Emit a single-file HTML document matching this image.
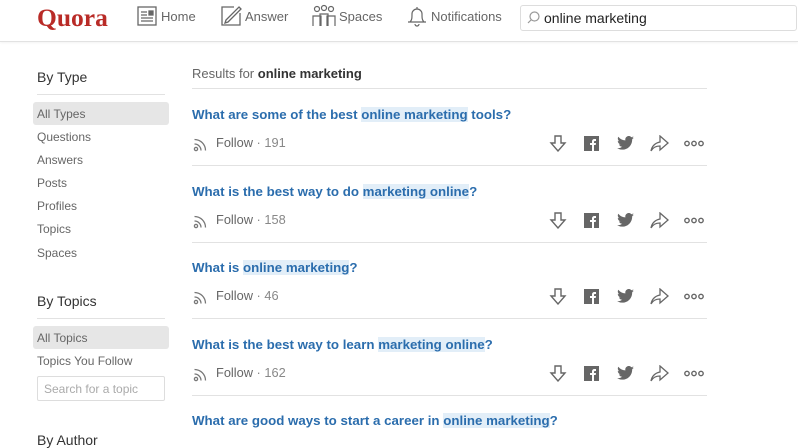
<!DOCTYPE html>
<html><head><meta charset="utf-8"><style>
*{margin:0;padding:0;box-sizing:border-box}
body{width:798px;height:440px;overflow:hidden;background:#fff;font-family:"Liberation Sans",Arial,sans-serif;position:relative;color:#333}
.a{position:absolute}
.hdr{left:0;top:0;width:798px;height:42px;border-bottom:1px solid #e2e2e2;box-shadow:0 1px 2px rgba(0,0,0,.05)}
.logo{left:37px;top:3px;font-family:"Liberation Serif",serif;font-weight:bold;font-size:25.5px;color:#b92b27}
.nav{font-size:13px;color:#666;top:9px}
.srch{left:520px;top:5px;width:277px;height:26px;border:1px solid #ddd;border-radius:3px;font-size:14px;color:#222;padding:4px 0 0 23px}
.h{font-size:14px;color:#333}
.ln{height:1px;background:#e2e2e2}
.it{font-size:12px;color:#666;left:37px}
.sel{left:33px;width:136px;height:23px;background:#e6e6e6;border-radius:3px}
.q{left:192px;font-size:13.3px;font-weight:bold;color:#2b6dad}
.q span{background:#e2eef8}
.f{left:216px;font-size:12.8px;color:#666}
.f b{font-weight:normal;color:#888}
</style></head><body>
<div class="a hdr"></div>
<div class="a logo">Quora</div>
<svg class="a" style="left:137px;top:6px" width="20" height="20" viewBox="0 0 20 20" fill="none" stroke="#666" stroke-width="1.3"><rect x="1" y="1" width="18" height="18"/><path d="M4 6h6M4 9h6M4 12h12M4 15h12"/><rect x="12" y="5" width="4" height="4" fill="#666"/></svg>
<div class="a nav" style="left:161px">Home</div>
<svg class="a" style="left:220px;top:5px" width="22" height="22" viewBox="0 0 22 22" fill="none" stroke="#666" stroke-width="1.3"><path d="M14 2H2v18h18V8"/><path d="M19 2l2 2L8 17l-3 1 1-3z"/></svg>
<div class="a nav" style="left:245px">Answer</div>
<svg class="a" style="left:312px;top:4px" width="24" height="23" viewBox="0 0 24 23" fill="none" stroke="#666" stroke-width="1.2"><circle cx="5" cy="5" r="2.5"/><circle cx="12" cy="4" r="2.5"/><circle cx="19" cy="5" r="2.5"/><path d="M1 22v-10h8v10M8 22v-12h8v12M15 22v-10h8v10"/></svg>
<div class="a nav" style="left:339px">Spaces</div>
<svg class="a" style="left:407px;top:5px" width="20" height="22" viewBox="0 0 20 22" fill="none" stroke="#666" stroke-width="1.2"><path d="M3 17c2-2 2-4 2-8a5 5 0 0110 0c0 4 0 6 2 8zM1 17h18M8 19a2 2 0 004 0M10 2v2"/></svg>
<div class="a nav" style="left:431px">Notifications</div>
<div class="a srch">online marketing</div>
<svg class="a" style="left:527px;top:11px" width="13" height="13" viewBox="0 0 13 13" fill="none" stroke="#999" stroke-width="1.2"><circle cx="7.5" cy="5.5" r="4.5"/><path d="M4.5 8.5L1 12"/></svg>

<div class="a h" style="left:37px;top:69px">By Type</div>
<div class="a ln" style="left:37px;top:94px;width:128px"></div>
<div class="a sel" style="top:102px"></div>
<div class="a it" style="top:107px">All Types</div>
<div class="a it" style="top:130px">Questions</div>
<div class="a it" style="top:153px">Answers</div>
<div class="a it" style="top:176px">Posts</div>
<div class="a it" style="top:199px">Profiles</div>
<div class="a it" style="top:222px">Topics</div>
<div class="a it" style="top:246px">Spaces</div>
<div class="a h" style="left:37px;top:293px">By Topics</div>
<div class="a ln" style="left:37px;top:318px;width:128px"></div>
<div class="a sel" style="top:326px"></div>
<div class="a it" style="top:331px">All Topics</div>
<div class="a it" style="top:354px">Topics You Follow</div>
<div class="a" style="left:37px;top:376px;width:128px;height:25px;border:1px solid #ddd;border-radius:2px;font-size:12px;color:#aaa;padding:5px 0 0 6px">Search for a topic</div>
<div class="a h" style="left:37px;top:432px">By Author</div>

<div class="a" style="left:192px;top:66px;font-size:13px;color:#666">Results for <b style="color:#333">online marketing</b></div>
<div class="a ln" style="left:192px;top:88px;width:515px"></div>

<div id="rows"></div>
<script>
var qs=[['What are some of the best ','online marketing',' tools?','191'],['What is the best way to do ','marketing online','?','158'],['What is ','online marketing','?','46'],['What is the best way to learn ','marketing online','?','162'],['What are good ways to start a career in ','online marketing','?','']];
var h='';
qs.forEach(function(q,i){var y=107+i*76.5;
h+='<div class="a q" style="top:'+y+'px">'+q[0]+'<span>'+q[1]+'</span>'+q[2]+'</div>';
if(q[3]){var fy=y+28;
h+='<svg class="a" style="left:193px;top:'+(fy+1)+'px" width="16" height="16" viewBox="0 0 16 16" fill="none" stroke="#777" stroke-width="1.3"><circle cx="3" cy="13" r="1.6"/><path d="M1.5 8a6.5 6.5 0 016.5 6.5M1.5 3.5A11 11 0 0112.5 14.5"/></svg>';
h+='<div class="a f" style="top:'+(fy)+'px">Follow <b>· '+q[3]+'</b></div>';
var iy=fy;
h+='<svg class="a" style="left:549px;top:'+iy+'px" width="18" height="17" viewBox="0 0 18 17" fill="none" stroke="#666" stroke-width="1.4"><path d="M6 1h6v7h4l-7 8-7-8h4z"/></svg>';
h+='<svg class="a" style="left:584px;top:'+(iy+1)+'px" width="15" height="15" viewBox="0 0 15 15"><rect width="15" height="15" fill="#666"/><path d="M8 15V9H6V7h2V5.5C8 4 9 3 10.5 3H12v2h-1c-.6 0-1 .3-1 1v1h2l-.3 2H10v6z" fill="#fff"/></svg>';
h+='<svg class="a" style="left:617px;top:'+(iy+1)+'px" width="17" height="14" viewBox="0 0 24 20"><path fill="#666" d="M24 2.4c-.9.4-1.8.7-2.8.8 1-.6 1.8-1.6 2.2-2.7-1 .6-2 1-3.1 1.2A4.9 4.9 0 0011.9 6.2 14 14 0 011.7 1 4.9 4.9 0 003.2 7.6a4.9 4.9 0 01-2.2-.6c0 2.4 1.7 4.4 3.9 4.8-.7.2-1.5.2-2.2.1a4.9 4.9 0 004.6 3.4A9.9 9.9 0 010 17.3 14 14 0 007.5 19.5c9 0 14-7.5 14-14v-.6c1-.7 1.8-1.6 2.5-2.5z"/></svg>';
h+='<svg class="a" style="left:650px;top:'+iy+'px" width="19" height="17" viewBox="0 0 19 17" fill="none" stroke="#666" stroke-width="1.3"><path d="M10 1l8 7-8 7v-4c-4 0-7 1-9 5 1-5 4-8 9-9z"/></svg>';
h+='<svg class="a" style="left:684px;top:'+(iy+5)+'px" width="20" height="7" viewBox="0 0 20 7" fill="none" stroke="#666" stroke-width="1.4"><circle cx="3" cy="3.5" r="2.2"/><circle cx="10" cy="3.5" r="2.2"/><circle cx="17" cy="3.5" r="2.2"/></svg>';
h+='<div class="a ln" style="left:192px;top:'+(y+58)+'px;width:515px"></div>';}
});
document.getElementById('rows').innerHTML=h;
</script>
</body></html>
